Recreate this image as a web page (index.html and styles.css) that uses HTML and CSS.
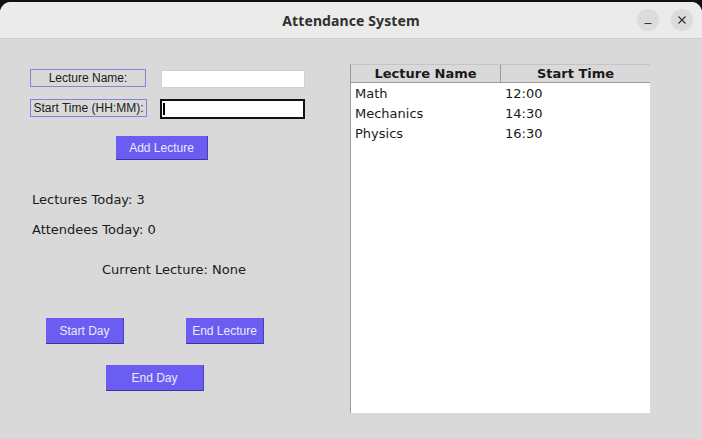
FILE: index.html
```html
<!DOCTYPE html>
<html>
<head>
<meta charset="utf-8">
<link rel="stylesheet" href="styles.css">
</head>
<body>
<div class="window">
  <div class="titlebar">
    <div class="title">Attendance System</div>
    <div class="controls">
      <span class="ctl"><svg width="10" height="10" viewBox="0 0 10 10"><path d="M1.5 8.5h7" stroke="#333" stroke-width="1.2"/></svg></span>
      <span class="ctl"><svg width="10" height="10" viewBox="0 0 10 10"><path d="M1.5 1.5l7 7M8.5 1.5l-7 7" stroke="#333" stroke-width="1.2"/></svg></span>
    </div>
  </div>
  <div class="content">
    <div class="left">
      <div class="row row1">
        <div class="lbl lbl1">Lecture Name:</div>
        <div class="entry entry1"></div>
      </div>
      <div class="row row2">
        <div class="lbl lbl2">Start Time (HH:MM):</div>
        <div class="entry entry2"><span class="caret"></span></div>
      </div>
      <div class="btn btn-add">Add Lecture</div>
      <div class="stat stat1">Lectures Today: 3</div>
      <div class="stat stat2">Attendees Today: 0</div>
      <div class="stat current">Current Lecture: None</div>
      <div class="btnrow">
        <div class="btn btn-start">Start Day</div>
        <div class="btn btn-endlec">End Lecture</div>
      </div>
      <div class="btn btn-endday">End Day</div>
    </div>
    <div class="tree">
      <div class="thead">
        <div class="th th1">Lecture Name</div>
        <div class="th th2">Start Time</div>
      </div>
      <div class="tbody">
        <div class="tr"><span class="td1">Math</span><span class="td2">12:00</span></div>
        <div class="tr"><span class="td1">Mechanics</span><span class="td2">14:30</span></div>
        <div class="tr"><span class="td1">Physics</span><span class="td2">16:30</span></div>
      </div>
    </div>
  </div>
</div>
</body>
</html>
```
FILE: styles.css
```css
html, body { margin: 0; padding: 0; }
body { background: #111; width: 702px; height: 439px; overflow: hidden; }
.window {
  margin-top: 2px;
  height: 437px;
  background: #d9d9d9;
  border-radius: 11px 11px 0 0;
  overflow: hidden;
}
.titlebar {
  height: 36px;
  background: #ebebeb;
  border-bottom: 1px solid #cdcdcd;
  position: relative;
  display: flex;
  align-items: center;
  justify-content: center;
}
.title {
  font-family: "Noto Sans", "DejaVu Sans", sans-serif;
  font-weight: 700;
  font-size: 14px;
  color: #303030;
  letter-spacing: 0.1px;
}
.controls {
  position: absolute;
  right: 9px;
  top: 7px;
  display: flex;
  gap: 12px;
}
.ctl {
  width: 22px; height: 22px; border-radius: 50%;
  background: #dcdcdc;
  display: flex; align-items: center; justify-content: center;
}
.content { display: flex; }
.left {
  width: 350px;
  display: flex;
  flex-direction: column;
  font-family: "Liberation Sans", Arial, sans-serif;
  font-size: 12px;
  color: #1a1a1a;
}
.row { display: flex; align-items: flex-start; }
.row1 { margin-top: 30px; }
.row2 { margin-top: 11px; }
.lbl {
  box-sizing: border-box;
  height: 18px;
  border: 1px solid #8c80dc;
  display: flex; align-items: center; justify-content: center;
  margin-left: 30px;
}
.lbl1 { width: 116px; }
.lbl2 { width: 117px; }
.entry { box-sizing: border-box; background: #fff; }
.entry1 { margin-left: 15px; margin-top: 1px; width: 144px; height: 18px; border: 1px solid #d0d0d0; }
.entry2 { margin-left: 13px; width: 145px; height: 20px; border: 2px solid #111; position: relative; }
.caret { position: absolute; left: 1px; top: 2px; width: 2px; height: 12px; background: #000; }
.btn {
  box-sizing: border-box;
  background: #6c5df2;
  color: #ece8ff;
  border-bottom: 1px solid #3e34a0;
  border-right: 1px solid #4a40b8;
  display: flex; align-items: center; justify-content: center;
  font-family: "Liberation Sans", Arial, sans-serif;
  font-size: 12px;
}
.btn-add { margin-top: 17px; margin-left: 116px; width: 92px; height: 24px; }
.stat {
  font-family: "DejaVu Sans", sans-serif;
  font-size: 13px;
  color: #1a1a1a;
  line-height: 16px;
}
.stat1 { margin-top: 32px; margin-left: 32px; }
.stat2 { margin-top: 14px; margin-left: 32px; }
.current { margin-top: 24px; margin-left: 102px; }
.btnrow { display: flex; margin-top: 40px; margin-left: 46px; gap: 62px; }
.btn-start, .btn-endlec { width: 78px; height: 26px; }
.btn-endday { margin-top: 21px; margin-left: 106px; width: 98px; height: 26px; }
.tree {
  margin-top: 25px;
  width: 300px;
  height: 349px;
  background: #fff;
  border-left: 1px solid #9a9a9a;
  box-sizing: border-box;
  font-family: "DejaVu Sans", sans-serif;
  font-size: 13px;
  color: #1a1a1a;
}
.thead { display: flex; height: 19px; background: #d9d9d9; border-top: 1px solid #c4c4c4; border-bottom: 1px solid #9a9a9a; box-sizing: border-box; }
.th { font-weight: 700; display: flex; align-items: center; justify-content: center; box-sizing: border-box; }
.th1 { width: 150px; border-right: 1px solid #9a9a9a; }
.th2 { width: 149px; }
.tr { display: flex; height: 20px; align-items: center; }
.td1 { width: 150px; padding-left: 4px; box-sizing: border-box; }
.td2 { padding-left: 4px; }
```
